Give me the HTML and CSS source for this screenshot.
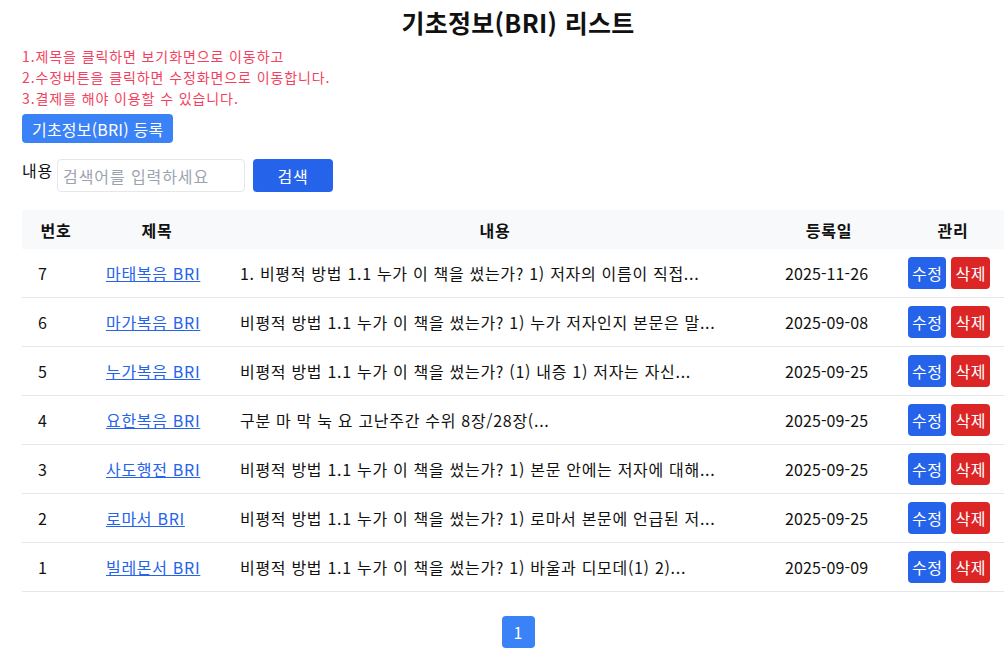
FILE: index.html
```html
<!DOCTYPE html>
<html lang="ko">
<head>
    <meta charset="UTF-8">
    <meta name="viewport" content="width=device-width, initial-scale=1.0">
    <title>기초정보(BRI) 리스트</title>
    <link rel="stylesheet" href="styles.css">
</head>
<body>
    <div class="container">
        <h1>기초정보(BRI) 리스트</h1>

        <div class="notice">
            <p>1.제목을 클릭하면 보기화면으로 이동하고</p>
            <p>2.수정버튼을 클릭하면 수정화면으로 이동합니다.</p>
            <p>3.결제를 해야 이용할 수 있습니다.</p>
        </div>

        <button class="btn-register">기초정보(BRI) 등록</button>

        <form class="search-bar">
            <label for="keyword">내용</label>
            <input type="text" id="keyword" placeholder="검색어를 입력하세요">
            <button type="submit" class="btn-search">검색</button>
        </form>

        <table class="list-table">
            <thead>
                <tr>
                    <th class="col-no">번호</th>
                    <th class="col-title">제목</th>
                    <th class="col-content">내용</th>
                    <th class="col-date">등록일</th>
                    <th class="col-manage">관리</th>
                </tr>
            </thead>
            <tbody>
                <tr>
                    <td>7</td>
                    <td><a href="#">마태복음 BRI</a></td>
                    <td>1. 비평적 방법 1.1 누가 이 책을 썼는가? 1) 저자의 이름이 직접...</td>
                    <td class="date">2025-11-26</td>
                    <td class="actions"><button class="btn-edit">수정</button><button class="btn-delete">삭제</button></td>
                </tr>
                <tr>
                    <td>6</td>
                    <td><a href="#">마가복음 BRI</a></td>
                    <td>비평적 방법 1.1 누가 이 책을 썼는가? 1) 누가 저자인지 본문은 말...</td>
                    <td class="date">2025-09-08</td>
                    <td class="actions"><button class="btn-edit">수정</button><button class="btn-delete">삭제</button></td>
                </tr>
                <tr>
                    <td>5</td>
                    <td><a href="#">누가복음 BRI</a></td>
                    <td>비평적 방법 1.1 누가 이 책을 썼는가? (1) 내증 1) 저자는 자신...</td>
                    <td class="date">2025-09-25</td>
                    <td class="actions"><button class="btn-edit">수정</button><button class="btn-delete">삭제</button></td>
                </tr>
                <tr>
                    <td>4</td>
                    <td><a href="#">요한복음 BRI</a></td>
                    <td>구분 마 막 눅 요 고난주간 수위 8장/28장(...</td>
                    <td class="date">2025-09-25</td>
                    <td class="actions"><button class="btn-edit">수정</button><button class="btn-delete">삭제</button></td>
                </tr>
                <tr>
                    <td>3</td>
                    <td><a href="#">사도행전 BRI</a></td>
                    <td>비평적 방법 1.1 누가 이 책을 썼는가? 1) 본문 안에는 저자에 대해...</td>
                    <td class="date">2025-09-25</td>
                    <td class="actions"><button class="btn-edit">수정</button><button class="btn-delete">삭제</button></td>
                </tr>
                <tr>
                    <td>2</td>
                    <td><a href="#">로마서 BRI</a></td>
                    <td>비평적 방법 1.1 누가 이 책을 썼는가? 1) 로마서 본문에 언급된 저...</td>
                    <td class="date">2025-09-25</td>
                    <td class="actions"><button class="btn-edit">수정</button><button class="btn-delete">삭제</button></td>
                </tr>
                <tr>
                    <td>1</td>
                    <td><a href="#">빌레몬서 BRI</a></td>
                    <td>비평적 방법 1.1 누가 이 책을 썼는가? 1) 바울과 디모데(1) 2)...</td>
                    <td class="date">2025-09-09</td>
                    <td class="actions"><button class="btn-edit">수정</button><button class="btn-delete">삭제</button></td>
                </tr>
            </tbody>
        </table>

        <div class="pagination">
            <a href="#" class="page-item active">1</a>
        </div>
    </div>
</body>
</html>
```

FILE: styles.css
```css
body {
    font-family: "Noto Sans CJK KR", "Noto Sans", sans-serif;
    margin: 0;
    color: #111;
    background: #fff;
}
.container {
    width: 992px;
    padding: 0 22px;
}
h1 {
    text-align: center;
    font-size: 25px;
    letter-spacing: 0.3px;
    font-weight: bold;
    margin: 0;
    padding-top: 4px;
    line-height: 36px;
}
.notice {
    margin-top: 6px;
    color: #f43f5e;
    font-size: 14px;
    letter-spacing: 0.9px;
    line-height: 21px;
}
.notice p {
    margin: 0;
}
button {
    font-family: inherit;
    border: none;
    color: #fff;
    cursor: pointer;
}
.btn-register {
    margin-top: 5px;
    background: #3b82f6;
    font-size: 16px;
    letter-spacing: 0.2px;
    height: 29px;
    padding: 0 10px;
    border-radius: 4px;
}
.search-bar {
    display: flex;
    align-items: flex-start;
    margin-top: 16px;
}
.search-bar label {
    font-size: 16px;
    letter-spacing: 0.8px;
    line-height: 22px;
    margin-right: 4px;
}
.search-bar input {
    width: 188px;
    height: 33px;
    box-sizing: border-box;
    border: 1px solid #e5e7eb;
    border-radius: 4px;
    padding: 0 5px;
    font-family: inherit;
    font-size: 16px;
    letter-spacing: 0.9px;
}
.search-bar input::placeholder {
    color: #9ca3af;
}
.btn-search {
    margin-left: 8px;
    width: 80px;
    height: 33px;
    background: #2563eb;
    font-size: 16px;
    letter-spacing: 0.8px;
    border-radius: 4px;
}
.list-table {
    width: 992px;
    margin-top: 18px;
    border-collapse: collapse;
    font-size: 16px;
    letter-spacing: 0.7px;
}
.list-table th {
    background: #f8f9fa;
    font-weight: bold;
    height: 39px;
    padding: 0;
    text-align: center;
}
.list-table td {
    height: 48px;
    padding: 0 16px;
    border-bottom: 1px solid #e5e7eb;
    white-space: nowrap;
}
.list-table td.date {
    padding-left: 19px;
    letter-spacing: 0.1px;
}
.col-no { width: 68px; }
.col-title { width: 134px; }
.col-content { width: 542px; }
.col-date { width: 126px; }
.list-table a {
    color: #2563eb;
}
.actions button {
    font-size: 16px;
    letter-spacing: 0.5px;
    height: 32px;
    padding: 0 4px;
    border-radius: 4px;
    margin-right: 5px;
}
.actions .btn-edit { background: #2563eb; }
.actions .btn-delete { background: #dc2626; }
.pagination {
    text-align: center;
    margin-top: 24px;
}
.page-item {
    display: inline-block;
    width: 33px;
    height: 32px;
    line-height: 32px;
    background: #3b82f6;
    color: #fff;
    border-radius: 4px;
    text-decoration: none;
    font-size: 16px;
}
```
